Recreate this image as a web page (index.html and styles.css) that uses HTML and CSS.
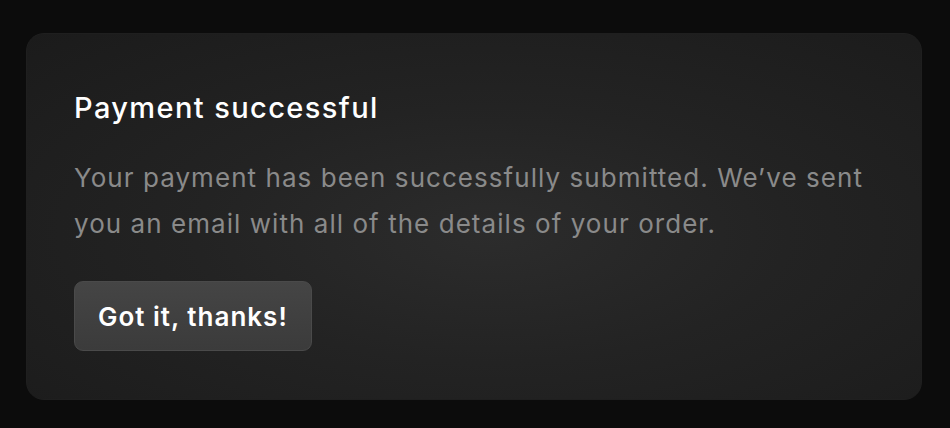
FILE: index.html
```html
<!DOCTYPE html>
<html>
<head>
<meta charset="utf-8">
<link rel="stylesheet" href="styles.css">
</head>
<body>
<div class="card">
  <h2 class="title">Payment successful</h2>
  <p class="text">Your payment has been successfully submitted. We’ve sent you an email with all of the details of your order.</p>
  <button class="btn">Got it, thanks!</button>
</div>
</body>
</html>
```

FILE: styles.css
```css
html, body { margin: 0; padding: 0; }
body {
  background: #0c0c0c;
  width: 950px;
  height: 428px;
  padding: 33px 28px 0 26px;
  box-sizing: border-box;
  font-family: Inter, "Noto Sans", sans-serif;
}
.card {
  box-sizing: border-box;
  width: 896px;
  height: 367px;
  border-radius: 18px;
  padding: 56px 48px 48px 47px;
  background: radial-gradient(ellipse at 52% 55%, #2c2c2c 0%, #232323 45%, #1b1b1b 100%);
  border: 1px solid #1f1f1f;
  display: flex;
  flex-direction: column;
  align-items: flex-start;
}
.title {
  margin: 0;
  font-size: 29px;
  font-weight: 500;
  letter-spacing: 1.4px;
  line-height: 36px;
  color: #ffffff;
}
.text {
  margin: 29px 0 0 0;
  font-size: 26px;
  letter-spacing: 1.05px;
  line-height: 46px;
  color: #8a8a8a;
  max-width: 810px;
}
.btn {
  margin-top: 34px;
  height: 73px;
  padding: 0 23px;
  border-radius: 9px;
  border: 1px solid #4a4a4a;
  background: linear-gradient(#454545, #3b3b3b);
  color: #fff;
  font-family: inherit;
  font-size: 26px;
  font-weight: 600;
  letter-spacing: 1px;
}
```
